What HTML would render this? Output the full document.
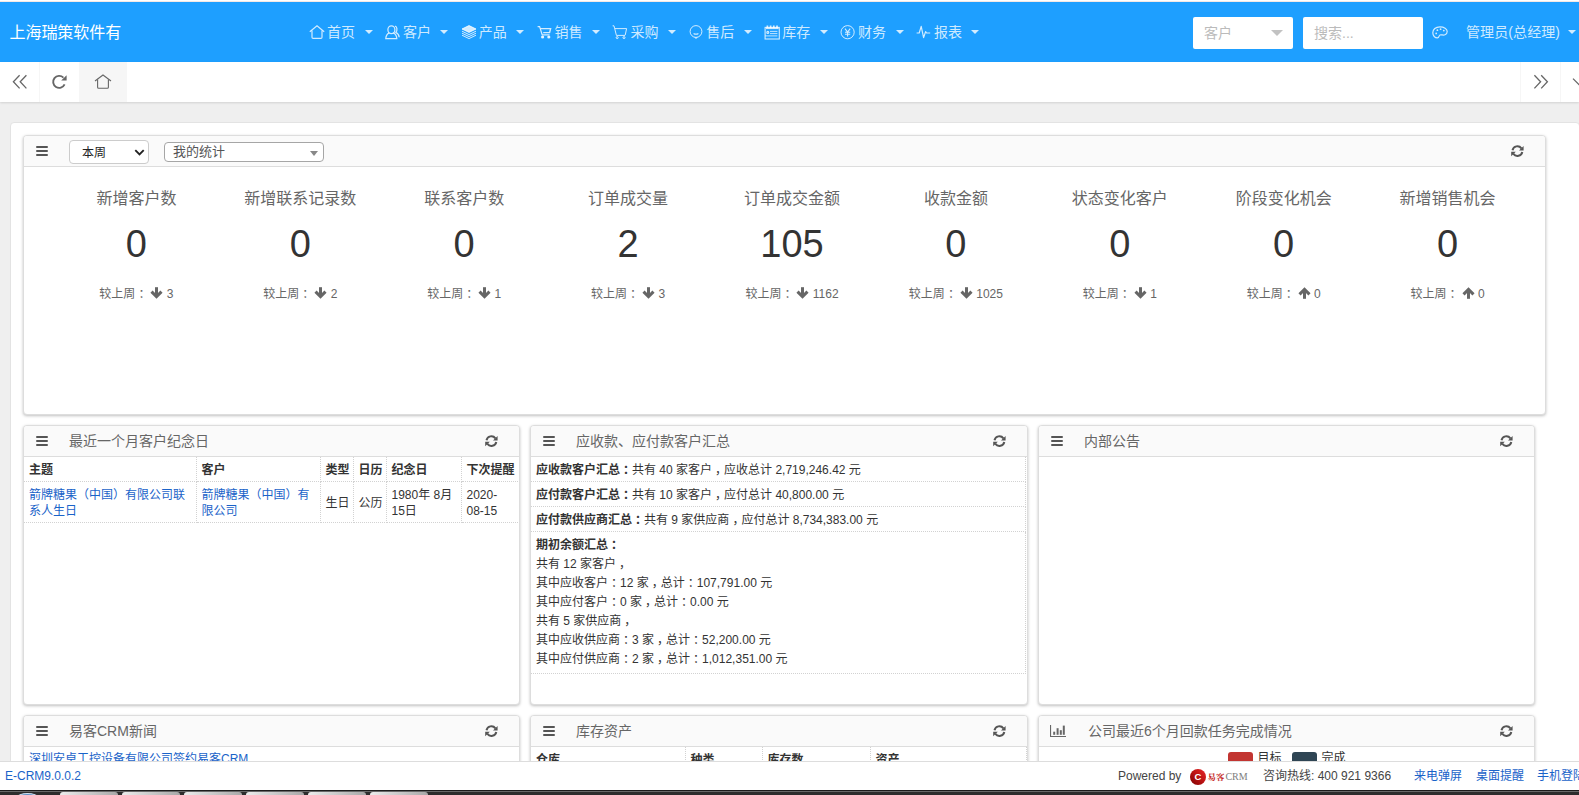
<!DOCTYPE html>
<html lang="zh-CN">
<head>
<meta charset="utf-8">
<title>E-CRM</title>
<style>
*{box-sizing:border-box;margin:0;padding:0}
html,body{width:1579px;height:795px;overflow:hidden;background:#efefef;font-family:"Liberation Sans","Noto Sans CJK SC",sans-serif;font-size:12px;color:#333}
body{position:relative}
.abs{position:absolute}
/* header */
#topline{position:absolute;left:0;top:0;width:1579px;height:2px;background:linear-gradient(#fff 0,#fff 1px,#f3e8e6 1px,#f3e8e6 2px)}
#hdr{position:absolute;left:0;top:2px;width:1579px;height:60px;background:#1e9fff;color:#fff}
#logo{position:absolute;left:9.5px;top:20.5px;font-size:16px;line-height:20px;white-space:nowrap;color:#fff;letter-spacing:-0.05px}
.nav{position:absolute;top:0;height:60px;line-height:60px;font-size:14px;color:rgba(255,255,255,.8);white-space:nowrap}
.nav svg{position:absolute;top:22.6px;left:0}
.nav span{position:absolute;left:18px;top:0}
.nav i{position:absolute;left:55.6px;top:28px;width:0;height:0;border-left:4px solid transparent;border-right:4px solid transparent;border-top:4px solid rgba(255,255,255,.8)}
.scar{position:absolute;left:78px;top:13px;width:0;height:0;border-left:6px solid transparent;border-right:6px solid transparent;border-top:6px solid #c2c2c2}
.hsel{position:absolute;top:15px;height:32px;background:#fff;border-radius:2px;color:#bbb;font-size:14px;line-height:33px;padding-left:11px}
/* tabs */
#tabs{position:absolute;left:0;top:62px;width:1579px;height:40px;background:#fff;box-shadow:0 1px 2px rgba(0,0,0,.12)}
#tabs .cell{position:absolute;top:0;height:40px;border-right:1px solid #f6f6f6}
/* main */
#main{position:absolute;left:10px;top:122px;width:1570px;height:700px;background:#fff;border:1px solid #e3e3e3;border-radius:4px}
.panel{position:absolute;background:#fff;border:1px solid #ddd;border-radius:4px;box-shadow:0 1px 3px rgba(0,0,0,.25)}
.ph{position:absolute;left:0;top:0;right:0;height:31px;background:#fafafa;border-bottom:1px solid #ddd;border-radius:3px 3px 0 0;font-size:14px;color:#666;line-height:30px}
.ph .t{position:absolute;left:45px;top:0;white-space:nowrap}
.ph .ham{position:absolute;left:12px;top:10px;width:12px;height:10px}
.ph .ham b{display:block;height:2px;background:#555;margin-bottom:2px;border-radius:1px}
.ph .rf{position:absolute;right:21px;top:9px}
/* stats */
.st{position:absolute;width:164px;text-align:center;top:0}
.st .l{position:absolute;left:0;width:100%;top:53px;font-size:16px;color:#666;line-height:20px;white-space:nowrap}
.st .n{position:absolute;left:0;width:100%;top:86px;font-size:38px;color:#333;line-height:44px}
.st .s{position:absolute;left:0;width:100%;top:150px;font-size:12px;color:#666;line-height:16px;white-space:nowrap}

.sel1{position:absolute;left:45px;top:4px;width:80px;height:24px;border:1px solid #ccc;border-radius:4px;background:#fff;font-size:12px;color:#222;line-height:24px;padding-left:12px}
.sel2{position:absolute;left:140px;top:6px;width:160px;height:20px;border:1px solid #a6a6a6;border-radius:4px;background:#fff;font-size:13px;color:#555;line-height:18px;padding-left:8px}
.sel2 i{position:absolute;right:5px;top:8px;width:0;height:0;border-left:4px solid transparent;border-right:4px solid transparent;border-top:5px solid #888}
.cl{position:relative;left:3px}
.ar{vertical-align:-1px;margin-left:3px;margin-right:0}
.pb{position:absolute;left:0;top:31px;right:0;bottom:0;overflow:hidden}
.t1{table-layout:fixed;border-collapse:collapse;font-size:12px;line-height:16px;color:#333}
.t1 th,.t1 td{border:1px dotted #d2d2d2;padding:5px 3px 3px 5px;text-align:left;vertical-align:middle;word-break:break-all}
.t1 th{font-weight:bold;color:#333}
.t1 tr:first-child th,.t1 tr:first-child td{border-top:0}
.t1 th:first-child,.t1 td:first-child{border-left:0}
.t1 td.ml{line-height:19px;padding:4px 3px 4px 5px}

/* footer */
#foot{position:absolute;left:0;top:761px;width:1579px;height:29px;background:#fff;border-top:1px solid #ddd;font-size:12px;line-height:28px;color:#444}
#task{position:absolute;left:0;top:790px;width:1579px;height:5px;background:linear-gradient(#1c1c1c 0,#1c1c1c 1px,#686868 1px,#686868 2px,#2d2d2d 2px,#2d2d2d 5px)}
#task b{position:absolute;top:2.4px;height:3px;width:58px;border-radius:3px 3px 0 0;background:linear-gradient(90deg,#ececec,#a8a8a8)}
#task u{position:absolute;left:17px;top:3px;width:21px;height:8px;border-radius:50%;background:#5d8fc4;border:1px solid #cfe0f0}
a{color:#1a63c9;text-decoration:none}
</style>
</head>
<body>
<div id="topline"></div>
<div id="hdr">
  <div id="logo">上海瑞策软件有</div>
<div class="nav" style="left:309.0px"><svg width="16" height="15" viewBox="0 0 16 15" fill="none" stroke="rgba(255,255,255,.8)" stroke-width="1.2"><path d="M0.8 6.8 L8 0.9 L15.2 6.8"/><path d="M3 5.6 V12.3 Q3 13.4 4.1 13.4 H11.9 Q13 13.4 13 12.3 V5.6"/></svg><span>首页</span><i></i></div>
<div class="nav" style="left:384.9px"><svg width="16" height="15" viewBox="0 0 16 15" fill="none" stroke="rgba(255,255,255,.8)" stroke-width="1.25"><ellipse cx="6.4" cy="4.7" rx="3.5" ry="3.9"/><path d="M4.3 7.9 C1.8 9 0.9 10.8 0.8 13.6 H11.8 C11.7 10.8 10.8 9 8.3 7.9"/><path d="M10 1.2 C12.2 1.6 12.6 5.4 10.9 7.4 C13 8.4 14 10.3 14.2 12.3"/></svg><span>客户</span><i></i></div>
<div class="nav" style="left:460.7px"><svg width="16" height="15" viewBox="0 0 16 15" fill="none" stroke="rgba(255,255,255,.8)" stroke-width="1"><path d="M8 0.6 L15 4 L8 7.4 L1 4 Z" fill="rgba(255,255,255,.8)"/><path d="M1 6.2 L8 9.6 L15 6.2"/><path d="M1 8.2 L8 11.6 L15 8.2"/><path d="M1 10.2 L8 13.6 L15 10.2"/></svg><span>产品</span><i></i></div>
<div class="nav" style="left:536.6px"><svg width="16" height="15" viewBox="0 0 16 15" fill="none" stroke="rgba(255,255,255,.8)" stroke-width="1.2"><path d="M0.6 1.6 H2.6 L5.2 9.8 H12.6"/><path d="M3.4 3.6 H13.6 L12.6 7.6 H6.2" stroke-width="1.4"/><circle cx="5.6" cy="12" r="1" fill="rgba(255,255,255,.8)"/><circle cx="11.8" cy="12" r="1" fill="rgba(255,255,255,.8)"/></svg><span>销售</span><i></i></div>
<div class="nav" style="left:612.4px"><svg width="16" height="15" viewBox="0 0 16 15" fill="none" stroke="rgba(255,255,255,.8)" stroke-width="1"><path d="M0.6 0.8 H2 L4.4 10.4 H13"/><path d="M3 3.6 H14.6 L13.2 10.2"/><circle cx="5.2" cy="12.6" r="1"/><circle cx="12" cy="12.6" r="1"/></svg><span>采购</span><i></i></div>
<div class="nav" style="left:688.3px"><svg width="16" height="15" viewBox="0 0 16 15" fill="none" stroke="rgba(255,255,255,.8)" stroke-width="1"><circle cx="8" cy="6.5" r="5.9"/><path d="M7 12.3 L8 13.6 L9 12.3"/><path d="M5.6 8.4 Q8 10 10.4 8.4" stroke-width="1.2"/></svg><span>售后</span><i></i></div>
<div class="nav" style="left:764.2px"><svg width="17" height="16" viewBox="0 0 17 16" fill="none" stroke="rgba(255,255,255,.8)" stroke-width="1.1"><rect x="1.1" y="2.4" width="14.2" height="11.6"/><path d="M3.4 0.6 V3 M6.6 0.6 V3 M9.8 0.6 V3 M13 0.6 V3" stroke-width="1.7"/><path d="M2 3.3 H14.6" stroke-width="1.6"/><path d="M6 6.4 H13.4 M6 8.6 H13.4 M1.2 10.9 H13.4" stroke-width="0.9"/><circle cx="3.8" cy="7.4" r="1"/></svg><span>库存</span><i></i></div>
<div class="nav" style="left:840.0px"><svg width="16" height="15" viewBox="0 0 16 15" fill="none" stroke="rgba(255,255,255,.8)" stroke-width="1"><circle cx="7.6" cy="7.2" r="6.6"/><path d="M5 3.6 L7.6 7 L10.2 3.6 M7.6 7 V11.4 M5 7.2 H10.2 M5 9.2 H10.2" stroke-width="1.1"/></svg><span>财务</span><i></i></div>
<div class="nav" style="left:915.9px"><svg width="16" height="15" viewBox="0 0 16 15" fill="none" stroke="rgba(255,255,255,.8)" stroke-width="1.2" stroke-linejoin="round"><path d="M0.6 8 H3.2 L5.2 1.4 L7.6 12.6 L9.6 6.6 L10.6 8 H14.2"/></svg><span>报表</span><i></i></div>

  <div class="hsel" style="left:1193px;width:100px">客户<em class="scar"></em></div>
  <div class="hsel" style="left:1303px;width:120px">搜索...</div>
  <svg class="abs" style="left:1432px;top:24px" width="16" height="13" viewBox="0 0 16 13" fill="none" stroke="rgba(255,255,255,.8)" stroke-width="1.2"><path d="M8 0.8 C3.6 0.8 0.8 3.4 0.8 6.8 C0.8 9.8 3 11.9 5.4 11.9 C7.4 11.9 6.6 9.6 8 9 C9.4 8.4 11 9.6 13 8.8 C14.6 8.2 15.2 6.8 15.2 5.6 C15.2 2.8 12 0.8 8 0.8 Z"/><circle cx="4.2" cy="7.4" r="0.9" fill="rgba(255,255,255,.8)" stroke="none"/><circle cx="5.4" cy="4.2" r="0.9" fill="rgba(255,255,255,.8)" stroke="none"/><circle cx="8.6" cy="3.2" r="0.9" fill="rgba(255,255,255,.8)" stroke="none"/><circle cx="11.8" cy="4.6" r="0.9" fill="rgba(255,255,255,.8)" stroke="none"/></svg>
  <div class="abs" style="left:1466px;top:0;line-height:60px;font-size:14px;color:rgba(255,255,255,.8);white-space:nowrap;letter-spacing:0.1px">管理员(总经理)</div>
  <i class="abs" style="left:1568px;top:28px;width:0;height:0;border-left:4px solid transparent;border-right:4px solid transparent;border-top:4px solid rgba(255,255,255,.8)"></i>
</div>
<div id="tabs">
  <div class="cell" style="left:0;width:40px"></div>
  <div class="cell" style="left:40px;width:40px"></div>
  <div class="cell" style="left:79px;width:48px;background:#f6f6f6;border:0"></div>
  <div class="cell" style="left:1520px;width:1px;border-right:1px solid #f6f6f6"></div>
  <div class="cell" style="left:1560px;width:1px;border-right:1px solid #f6f6f6"></div>
  <svg class="abs" style="left:12px;top:12px" width="16" height="16" viewBox="0 0 16 16" fill="none" stroke="#666" stroke-width="1.3"><path d="M7.6 1.2 L1.4 7.8 L7.6 14.4 M14.4 1.2 L8.2 7.8 L14.4 14.4"/></svg>
  <svg class="abs" style="left:51px;top:12px" width="17" height="16" viewBox="0 0 17 16" fill="none" stroke="#666" stroke-width="1.9"><path d="M13.6 10.4 A6 6 0 1 1 12.4 3.6"/><path d="M15.6 1.2 V6.4 H10.2 Z" fill="#666" stroke="none"/></svg>
  <svg class="abs" style="left:94px;top:12px" width="18" height="16" viewBox="0 0 18 16" fill="none" stroke="#666" stroke-width="1.1"><path d="M1 7 L9 1 L17 7"/><path d="M3.6 5.6 V13.2 Q3.6 14.2 4.6 14.2 H13.4 Q14.4 14.2 14.4 13.2 V5.6"/></svg>
  <svg class="abs" style="left:1533px;top:12px" width="16" height="16" viewBox="0 0 16 16" fill="none" stroke="#666" stroke-width="1.3"><path d="M1.4 1.2 L7.6 7.8 L1.4 14.4 M8.2 1.2 L14.4 7.8 L8.2 14.4"/></svg>
  <svg class="abs" style="left:1572px;top:12px" width="16" height="16" viewBox="0 0 16 16" fill="none" stroke="#666" stroke-width="1.3"><path d="M1 4.6 L8 11.6 L15 4.6"/></svg>
</div>
<div id="main"></div>
<div class="panel" style="left:23px;top:135px;width:1523px;height:280px">
<div class="ph"><div class="ham"><b></b><b></b><b></b></div>
<div class="sel1">本周<svg class="abs" style="left:64px;top:8px" width="11" height="8" viewBox="0 0 11 8" fill="none" stroke="#222" stroke-width="1.9"><path d="M1.3 1.2 L5.5 5.4 L9.7 1.2"/></svg></div>
<div class="sel2">我的统计<i></i></div>
<svg class="rf" width="13" height="13" viewBox="0 0 13 13" fill="none" stroke="#555" stroke-width="2"><path d="M1.5 5.2 A5 5 0 0 1 10.4 3.3"/><path d="M11.3 7 A5 5 0 0 1 2.4 8.9"/><path d="M12.6 0.9 V5.5 H8 Z M0.2 11.3 V6.7 H4.8 Z" fill="#555" stroke="none"/></svg></div>
<div class="st" style="left:30.4px"><div class="l">新增客户数</div><div class="n">0</div><div class="s">较上周<span class="cl">：</span><svg class="ar" width="13" height="12" viewBox="0 0 13 12" fill="none" stroke="#666" stroke-width="3" stroke-linejoin="miter"><g><path d="M6.5 0.2 V9.6"/><path d="M1.5 4.6 L6.5 9.6 L11.5 4.6"/></g></svg> 3</div></div>
<div class="st" style="left:194.3px"><div class="l">新增联系记录数</div><div class="n">0</div><div class="s">较上周<span class="cl">：</span><svg class="ar" width="13" height="12" viewBox="0 0 13 12" fill="none" stroke="#666" stroke-width="3" stroke-linejoin="miter"><g><path d="M6.5 0.2 V9.6"/><path d="M1.5 4.6 L6.5 9.6 L11.5 4.6"/></g></svg> 2</div></div>
<div class="st" style="left:358.2px"><div class="l">联系客户数</div><div class="n">0</div><div class="s">较上周<span class="cl">：</span><svg class="ar" width="13" height="12" viewBox="0 0 13 12" fill="none" stroke="#666" stroke-width="3" stroke-linejoin="miter"><g><path d="M6.5 0.2 V9.6"/><path d="M1.5 4.6 L6.5 9.6 L11.5 4.6"/></g></svg> 1</div></div>
<div class="st" style="left:522.1px"><div class="l">订单成交量</div><div class="n">2</div><div class="s">较上周<span class="cl">：</span><svg class="ar" width="13" height="12" viewBox="0 0 13 12" fill="none" stroke="#666" stroke-width="3" stroke-linejoin="miter"><g><path d="M6.5 0.2 V9.6"/><path d="M1.5 4.6 L6.5 9.6 L11.5 4.6"/></g></svg> 3</div></div>
<div class="st" style="left:686.0px"><div class="l">订单成交金额</div><div class="n">105</div><div class="s">较上周<span class="cl">：</span><svg class="ar" width="13" height="12" viewBox="0 0 13 12" fill="none" stroke="#666" stroke-width="3" stroke-linejoin="miter"><g><path d="M6.5 0.2 V9.6"/><path d="M1.5 4.6 L6.5 9.6 L11.5 4.6"/></g></svg> 1162</div></div>
<div class="st" style="left:849.9px"><div class="l">收款金额</div><div class="n">0</div><div class="s">较上周<span class="cl">：</span><svg class="ar" width="13" height="12" viewBox="0 0 13 12" fill="none" stroke="#666" stroke-width="3" stroke-linejoin="miter"><g><path d="M6.5 0.2 V9.6"/><path d="M1.5 4.6 L6.5 9.6 L11.5 4.6"/></g></svg> 1025</div></div>
<div class="st" style="left:1013.8px"><div class="l">状态变化客户</div><div class="n">0</div><div class="s">较上周<span class="cl">：</span><svg class="ar" width="13" height="12" viewBox="0 0 13 12" fill="none" stroke="#666" stroke-width="3" stroke-linejoin="miter"><g><path d="M6.5 0.2 V9.6"/><path d="M1.5 4.6 L6.5 9.6 L11.5 4.6"/></g></svg> 1</div></div>
<div class="st" style="left:1177.7px"><div class="l">阶段变化机会</div><div class="n">0</div><div class="s">较上周<span class="cl">：</span><svg class="ar" width="13" height="12" viewBox="0 0 13 12" fill="none" stroke="#666" stroke-width="3" stroke-linejoin="miter"><g transform="rotate(180 6.5 6)"><path d="M6.5 0.2 V9.6"/><path d="M1.5 4.6 L6.5 9.6 L11.5 4.6"/></g></svg> 0</div></div>
<div class="st" style="left:1341.6px"><div class="l">新增销售机会</div><div class="n">0</div><div class="s">较上周<span class="cl">：</span><svg class="ar" width="13" height="12" viewBox="0 0 13 12" fill="none" stroke="#666" stroke-width="3" stroke-linejoin="miter"><g transform="rotate(180 6.5 6)"><path d="M6.5 0.2 V9.6"/><path d="M1.5 4.6 L6.5 9.6 L11.5 4.6"/></g></svg> 0</div></div>
</div>
<div class="panel" style="left:23px;top:425px;width:497px;height:280px">
<div class="ph"><div class="ham"><b></b><b></b><b></b></div><div class="t">最近一个月客户纪念日</div><svg class="rf" width="13" height="13" viewBox="0 0 13 13" fill="none" stroke="#555" stroke-width="2"><path d="M1.5 5.2 A5 5 0 0 1 10.4 3.3"/><path d="M11.3 7 A5 5 0 0 1 2.4 8.9"/><path d="M12.6 0.9 V5.5 H8 Z M0.2 11.3 V6.7 H4.8 Z" fill="#555" stroke="none"/></svg></div>
<div class="pb"><table class="t1" style="width:495px"><colgroup><col style="width:172px"><col style="width:124px"><col style="width:33px"><col style="width:33px"><col style="width:75px"><col style="width:58px"></colgroup>
<tr><th>主题</th><th>客户</th><th>类型</th><th>日历</th><th>纪念日</th><th>下次提醒</th></tr>
<tr><td><a>箭牌糖果（中国）有限公司联系人生日</a></td><td><a>箭牌糖果（中国）有限公司</a></td><td>生日</td><td>公历</td><td>1980年 8月 15日</td><td>2020-<br>08-15</td></tr></table></div></div>
<div class="panel" style="left:530px;top:425px;width:498px;height:280px">
<div class="ph"><div class="ham"><b></b><b></b><b></b></div><div class="t">应收款、应付款客户汇总</div><svg class="rf" width="13" height="13" viewBox="0 0 13 13" fill="none" stroke="#555" stroke-width="2"><path d="M1.5 5.2 A5 5 0 0 1 10.4 3.3"/><path d="M11.3 7 A5 5 0 0 1 2.4 8.9"/><path d="M12.6 0.9 V5.5 H8 Z M0.2 11.3 V6.7 H4.8 Z" fill="#555" stroke="none"/></svg></div>
<div class="pb"><table class="t1 t2" style="width:495px">
<tr><td><b>应收款客户汇总<span class="cl">：</span></b>共有 40 家客户<span class="cl">，</span>应收总计 2,719,246.42 元</td></tr>
<tr><td><b>应付款客户汇总<span class="cl">：</span></b>共有 10 家客户<span class="cl">，</span>应付总计 40,800.00 元</td></tr>
<tr><td><b>应付款供应商汇总<span class="cl">：</span></b>共有 9 家供应商<span class="cl">，</span>应付总计 8,734,383.00 元</td></tr>
<tr><td class="ml"><b>期初余额汇总<span class="cl">：</span></b><br>共有 12 家客户<span class="cl">，</span><br>其中应收客户<span class="cl">：</span>12 家<span class="cl">，</span>总计<span class="cl">：</span>107,791.00 元<br>其中应付客户<span class="cl">：</span>0 家<span class="cl">，</span>总计<span class="cl">：</span>0.00 元<br>共有 5 家供应商<span class="cl">，</span><br>其中应收供应商<span class="cl">：</span>3 家<span class="cl">，</span>总计<span class="cl">：</span>52,200.00 元<br>其中应付供应商<span class="cl">：</span>2 家<span class="cl">，</span>总计<span class="cl">：</span>1,012,351.00 元</td></tr></table></div></div>
<div class="panel" style="left:1038px;top:425px;width:497px;height:280px">
<div class="ph"><div class="ham"><b></b><b></b><b></b></div><div class="t">内部公告</div><svg class="rf" width="13" height="13" viewBox="0 0 13 13" fill="none" stroke="#555" stroke-width="2"><path d="M1.5 5.2 A5 5 0 0 1 10.4 3.3"/><path d="M11.3 7 A5 5 0 0 1 2.4 8.9"/><path d="M12.6 0.9 V5.5 H8 Z M0.2 11.3 V6.7 H4.8 Z" fill="#555" stroke="none"/></svg></div></div>
<div class="panel" style="left:23px;top:715px;width:497px;height:280px">
<div class="ph"><div class="ham"><b></b><b></b><b></b></div><div class="t">易客CRM新闻</div><svg class="rf" width="13" height="13" viewBox="0 0 13 13" fill="none" stroke="#555" stroke-width="2"><path d="M1.5 5.2 A5 5 0 0 1 10.4 3.3"/><path d="M11.3 7 A5 5 0 0 1 2.4 8.9"/><path d="M12.6 0.9 V5.5 H8 Z M0.2 11.3 V6.7 H4.8 Z" fill="#555" stroke="none"/></svg></div>
<div class="pb"><div style="padding:4px 5px;line-height:16px"><a>深圳安卓工控设备有限公司签约易客CRM</a></div></div></div>
<div class="panel" style="left:530px;top:715px;width:498px;height:280px">
<div class="ph"><div class="ham"><b></b><b></b><b></b></div><div class="t">库存资产</div><svg class="rf" width="13" height="13" viewBox="0 0 13 13" fill="none" stroke="#555" stroke-width="2"><path d="M1.5 5.2 A5 5 0 0 1 10.4 3.3"/><path d="M11.3 7 A5 5 0 0 1 2.4 8.9"/><path d="M12.6 0.9 V5.5 H8 Z M0.2 11.3 V6.7 H4.8 Z" fill="#555" stroke="none"/></svg></div>
<div class="pb"><table class="t1" style="width:495px"><colgroup><col style="width:154px"><col style="width:77px"><col style="width:108px"><col style="width:156px"></colgroup>
<tr><th>仓库</th><th>种类</th><th>库存数</th><th>资产</th></tr></table></div></div>
<div class="panel" style="left:1038px;top:715px;width:497px;height:280px">
<div class="ph"><svg class="abs" style="left:11px;top:9px" width="16" height="12" viewBox="0 0 16 12" fill="#666"><path d="M0 0 H1.1 V10.9 H16 V12 H0 Z"/><rect x="3.2" y="6.7" width="2" height="3.1"/><rect x="6.6" y="3.2" width="2" height="6.6"/><rect x="9.8" y="5.2" width="2" height="4.6"/><rect x="12.8" y="0.6" width="2" height="9.2"/></svg><div class="t" style="left:49px">公司最近6个月回款任务完成情况</div><svg class="rf" width="13" height="13" viewBox="0 0 13 13" fill="none" stroke="#555" stroke-width="2"><path d="M1.5 5.2 A5 5 0 0 1 10.4 3.3"/><path d="M11.3 7 A5 5 0 0 1 2.4 8.9"/><path d="M12.6 0.9 V5.5 H8 Z M0.2 11.3 V6.7 H4.8 Z" fill="#555" stroke="none"/></svg></div>
<div class="pb"><div class="abs" style="left:188.5px;top:5px;width:25px;height:14px;border-radius:3px;background:#c23531"></div><div class="abs" style="left:218.5px;top:3px;line-height:16px;color:#333">目标</div><div class="abs" style="left:252.5px;top:5px;width:25px;height:14px;border-radius:3px;background:#2f4554"></div><div class="abs" style="left:282.5px;top:3px;line-height:16px;color:#333">完成</div></div></div>
<div id="foot">
<a class="abs" style="left:5px;top:0">E-CRM9.0.0.2</a>
<span class="abs" style="left:1118px;top:0">Powered by</span>
<span class="abs" style="left:1190px;top:7px;width:16px;height:16px;border-radius:8px;background:linear-gradient(225deg,#e32626 5%,#c01414 45%,#7c0000 100%);color:#fff;font-size:9.5px;font-weight:bold;line-height:16px;text-align:center">C</span>
<span class="abs" style="left:1207.5px;top:0.7px;font-family:'Liberation Serif','Noto Serif CJK SC',serif;font-size:8.5px;font-weight:bold;color:#c62828;white-space:nowrap">易客<span style="color:#7d7d7d;font-weight:normal;font-size:10px;letter-spacing:-0.1px;margin-left:1px">CRM</span></span>
<span class="abs" style="left:1263px;top:0;white-space:nowrap">咨询热线: 400 921 9366</span>
<a class="abs" style="left:1414px;top:0;white-space:nowrap">来电弹屏</a>
<a class="abs" style="left:1476px;top:0;white-space:nowrap">桌面提醒</a>
<a class="abs" style="left:1537px;top:0;white-space:nowrap">手机登陆</a>
</div>
<div id="task"><u></u><b style="left:60px"></b><b style="left:122px"></b><b style="left:184px"></b><b style="left:246px"></b><b style="left:308px"></b><b style="left:370px"></b></div>
</body>
</html>
